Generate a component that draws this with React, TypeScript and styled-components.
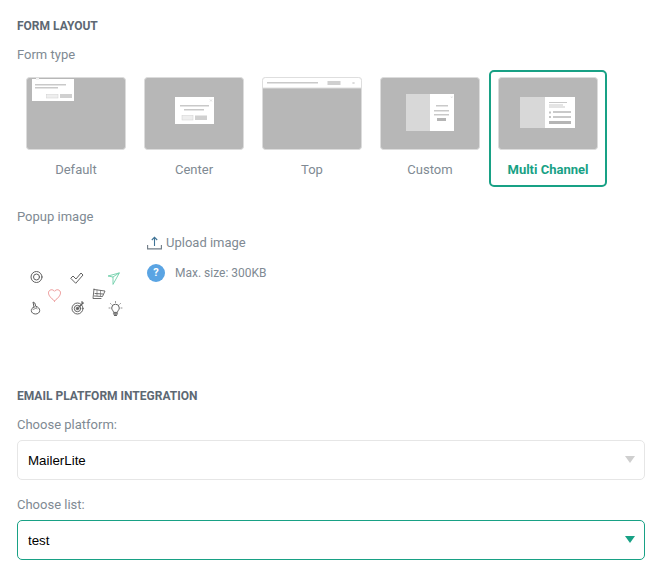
import React from 'react'
import styled, { createGlobalStyle } from 'styled-components'

const GlobalStyle = createGlobalStyle`
  html, body {
    margin: 0;
    padding: 0;
    background: #fff;
    overflow: hidden;
  }
  * {
    box-sizing: border-box;
  }
`

const Page = styled.div`
  width: 661px;
  height: 578px;
  padding: 19px 16px 0 17px;
  font-family: Roboto, sans-serif;
  color: #808a93;
  font-size: 13px;
`

const SectionTitle = styled.h3`
  margin: 0;
  height: 14px;
  font-size: 12px;
  line-height: 14px;
  font-weight: 700;
  color: #5d6873;
`

const FieldLabel = styled.div`
  height: 15px;
  line-height: 15px;
  font-size: 13px;
  color: #808a93;
`

const FormTypeLabel = styled(FieldLabel)`
  margin-top: 14px;
`

const FormTypes = styled.div`
  display: flex;
  margin-top: 8px;
`

const TypeCard = styled.div<{ $selected?: boolean }>`
  width: 118px;
  height: 117px;
  padding: 5px 7px 0;
  border: 2px solid ${(p) => (p.$selected ? '#18a185' : 'transparent')};
  border-radius: 5px;
  display: flex;
  flex-direction: column;
  align-items: center;
`

const Thumb = styled.svg`
  display: block;
  width: 100px;
  height: 73px;
  flex: none;
`

const TypeName = styled.div<{ $selected?: boolean }>`
  margin-top: 12px;
  line-height: 15px;
  font-size: 13px;
  font-weight: ${(p) => (p.$selected ? 700 : 400)};
  color: ${(p) => (p.$selected ? '#18a185' : '#808a93')};
`

const PopupRow = styled.div`
  display: flex;
  margin-top: 22px;
`

const PopupColumn = styled.div`
  width: 130px;
  flex: none;
`

const PopupPicture = styled.svg`
  display: block;
  width: 116px;
  height: 100px;
  margin-top: 10px;
`

const UploadColumn = styled.div`
  padding-top: 26px;
`

const UploadLink = styled.div`
  display: flex;
  align-items: center;
  gap: 4px;
  height: 15px;
  line-height: 15px;
  color: #808a93;
`

const HintRow = styled.div`
  display: flex;
  align-items: center;
  margin-top: 14px;
  font-size: 12px;
`

const HintBadge = styled.span`
  width: 18px;
  height: 18px;
  margin-right: 10px;
  border-radius: 50%;
  background: #5aa4e3;
  color: #fff;
  font-size: 11px;
  font-weight: 700;
  line-height: 18px;
  text-align: center;
`

const IntegrationBlock = styled.div`
  margin-top: 55px;
`

const Field = styled.div`
  margin-top: 14px;

  & + & {
    margin-top: 17px;
  }
`

const SelectBox = styled.div<{ $active?: boolean }>`
  position: relative;
  margin-top: 8px;
  height: 40px;

  &::after {
    content: '';
    position: absolute;
    top: 16px;
    right: 10px;
    border-left: 5.5px solid transparent;
    border-right: 5.5px solid transparent;
    border-top: 7px solid ${(p) => (p.$active ? '#18a185' : '#cfcfcf')};
    pointer-events: none;
  }
`

const Select = styled.select<{ $active?: boolean }>`
  appearance: none;
  display: block;
  width: 100%;
  height: 40px;
  padding: 0 10px;
  background: #fff;
  border: 1px solid ${(p) => (p.$active ? '#18a185' : '#e6e6e6')};
  border-radius: 5px;
  outline: none;
  font-family: 'Liberation Sans', Arial, sans-serif;
  font-size: 13.33px;
  color: #000;
`

const Bar = ({ x, y, w, h = 1.5, c = '#c9c9c9' }: { x: number; y: number; w: number; h?: number; c?: string }) => (
  <rect x={x} y={y} width={w} height={h} fill={c} />
)

const Backdrop = () => <rect x="0.5" y="0.5" width="99" height="72" rx="3" fill="#b7b7b7" stroke="#dcdcdc" strokeWidth="1" />

const DefaultThumb = () => (
  <Thumb viewBox="0 0 100 73">
    <Backdrop />
    <rect x="6" y="2" width="42" height="22" fill="#fff" />
    <rect x="10" y="1" width="3" height="2" fill="#f2f2f2" />
    <Bar x={9} y={7} w={31} />
    <Bar x={9} y={10} w={23} />
    <rect x="20.5" y="17.5" width="11.5" height="3.5" fill="#eee" stroke="#d0d0d0" strokeWidth="0.5" />
    <rect x="34" y="17" width="12" height="4" fill="#d0d0d0" />
  </Thumb>
)

const CenterThumb = () => (
  <Thumb viewBox="0 0 100 73">
    <Backdrop />
    <rect x="31" y="20" width="39" height="27" fill="#fff" />
    <Bar x={36} y={28} w={29} />
    <Bar x={40} y={32} w={20} />
    <rect x="38" y="38.5" width="11" height="4.5" fill="#eee" stroke="#d0d0d0" strokeWidth="0.5" />
    <rect x="51" y="38.5" width="12" height="4.5" fill="#d0d0d0" />
    <path d="M66 22.500l2 2m0-2l-2 2" stroke="#ccc" strokeWidth="0.6" />
  </Thumb>
)

const TopThumb = () => (
  <Thumb viewBox="0 0 100 73">
    <Backdrop />
    <path d="M.5 11V3.500a3 3 0 0 1 3-3h93a3 3 0 0 1 3 3V11z" fill="#fff" stroke="#dedede" strokeWidth="1" />
    <Bar x={5} y={5} w={51} />
    <rect x="65.500" y="4" width="13" height="4" fill="#d0d0d0" />
    <path d="M90.500 5l2 2m0-2l-2 2" stroke="#c4c4c4" strokeWidth="0.7" />
  </Thumb>
)

const CustomThumb = () => (
  <Thumb viewBox="0 0 100 73">
    <Backdrop />
    <rect x="26" y="17" width="24" height="37" fill="#d8d8d8" />
    <rect x="50" y="17" width="24" height="37" fill="#fff" />
    <Bar x={56} y={28} w={12} />
    <Bar x={54} y={33} w={15} />
    <Bar x={54} y={37} w={15} />
    <rect x="57" y="41" width="9" height="3" fill="#b5b5b5" />
    <path d="M71 19.500l1.400 1.400m0-1.400l-1.400 1.400" stroke="#ccc" strokeWidth="0.5" />
  </Thumb>
)

const MultiThumb = () => (
  <Thumb viewBox="0 0 100 73">
    <Backdrop />
    <rect x="22" y="20" width="25" height="31" fill="#d8d8d8" />
    <rect x="47" y="20" width="30" height="31" fill="#fff" />
    <Bar x={51} y={25} w={18} h={1} />
    <Bar x={51} y={27.5} w={14} h={1} />
    <Bar x={51} y={29.5} w={16} h={1} />
    <rect x="51" y="34.500" width="2" height="2" fill="#c4c4c4" />
    <Bar x={55} y={34} w={18} h={2} />
    <rect x="51" y="39" width="2" height="2" fill="#c4c4c4" />
    <Bar x={55} y={39} w={18} h={2} />
    <rect x="51" y="44" width="22" height="3" fill="#b5b5b5" />
  </Thumb>
)

const types = [
  { name: 'Default', thumb: <DefaultThumb /> },
  { name: 'Center', thumb: <CenterThumb /> },
  { name: 'Top', thumb: <TopThumb /> },
  { name: 'Custom', thumb: <CustomThumb /> },
  { name: 'Multi Channel', thumb: <MultiThumb />, selected: true },
]

// doodle icons, coordinates are page px minus the picture's origin (17, 234)
const PopupDoodles = () => (
  <PopupPicture viewBox="0 0 116 100" fill="none" stroke="#606060" strokeWidth="1" strokeLinejoin="round" strokeLinecap="round">
    <g>
      <circle cx="19.500" cy="43" r="5.500" />
      <circle cx="19.500" cy="43" r="3" />
    </g>
    <path d="M54 44l2-2 3 3 5-6 2 2-7 8z" />
    <path d="M102 39l-11 3 5 1 0 7zM96 43l6-4" stroke="#6fcfa9" strokeWidth="0.9" />
    <path d="M37.500 67c-3.800-3.200-6-5.500-6-8.200 0-3 4-4.300 6-1.500 2-2.800 6-1.500 6 1.500 0 2.700-2.200 5-6 8.200z" stroke="#ea8b8b" strokeWidth="0.9" />
    <g strokeWidth="0.9">
      <path d="M77 55.500l11 1.500-2.500 5.500-8-.5" />
      <path d="M78 59.500l8 .5M77 55l-1 9.500h8" />
      <path d="M80 56v5.500M83.500 56.500v5.500" strokeWidth="0.6" />
    </g>
    <g>
      <path d="M17 73l-1-5 1.800 1 1 3.300c2.200.5 3.900 2.200 3.900 4.200 0 2.100-1.900 3.500-4.200 3.500s-4.200-1.400-4.200-3.500c0-1.400.8-2.800 2.700-3.500z" />
      <path d="M16 75.500l2.500-1M19 73l1 2" strokeWidth="0.7" />
    </g>
    <g>
      <circle cx="60.500" cy="74.500" r="5.500" />
      <circle cx="60.500" cy="74.500" r="3.200" />
      <circle cx="60.500" cy="74.500" r="1.200" fill="#606060" />
      <path d="M62 73l4-4M65 67.500v1.500h1.500" strokeWidth="1.200" />
    </g>
    <g>
      <path d="M96.500 78c0-1.500-1.800-2-1.800-4a3.800 3.800 0 0 1 7.600 0c0 2-1.800 2.500-1.800 4z" />
      <path d="M96.500 79.800h4M97.500 81.300h2" strokeWidth="1.300" />
      <path d="M98.500 67.500v1M93.500 69.500l.7.7M103.500 69.500l-.7.7M92 74h1M104 74h1" strokeWidth="0.7" />
    </g>
  </PopupPicture>
)

const UploadIcon = () => (
  <svg width="15" height="15" viewBox="0 0 15 15" fill="none" stroke="#3f7396" strokeWidth="1.1">
    <path d="M7.500 11V2.500M4.800 5l2.700-2.700L10.200 5" />
    <path d="M.6 10v3.900h13.800V10" stroke="#6f7b85" />
  </svg>
)

export default function App() {
  return (
    <Page>
      <GlobalStyle />
      <SectionTitle>FORM LAYOUT</SectionTitle>
      <FormTypeLabel>Form type</FormTypeLabel>
      <FormTypes>
        {types.map((t) => (
          <TypeCard key={t.name} $selected={t.selected}>
            {t.thumb}
            <TypeName $selected={t.selected}>{t.name}</TypeName>
          </TypeCard>
        ))}
      </FormTypes>

      <PopupRow>
        <PopupColumn>
          <FieldLabel>Popup image</FieldLabel>
          <PopupDoodles />
        </PopupColumn>
        <UploadColumn>
          <UploadLink>
            <UploadIcon />
            Upload image
          </UploadLink>
          <HintRow>
            <HintBadge>?</HintBadge>
            Max. size: 300KB
          </HintRow>
        </UploadColumn>
      </PopupRow>

      <IntegrationBlock>
        <SectionTitle>EMAIL PLATFORM INTEGRATION</SectionTitle>
        <Field>
          <FieldLabel>Choose platform:</FieldLabel>
          <SelectBox>
            <Select defaultValue="MailerLite">
              <option>MailerLite</option>
            </Select>
          </SelectBox>
        </Field>
        <Field>
          <FieldLabel>Choose list:</FieldLabel>
          <SelectBox $active>
            <Select $active defaultValue="test">
              <option>test</option>
            </Select>
          </SelectBox>
        </Field>
      </IntegrationBlock>
    </Page>
  )
}
